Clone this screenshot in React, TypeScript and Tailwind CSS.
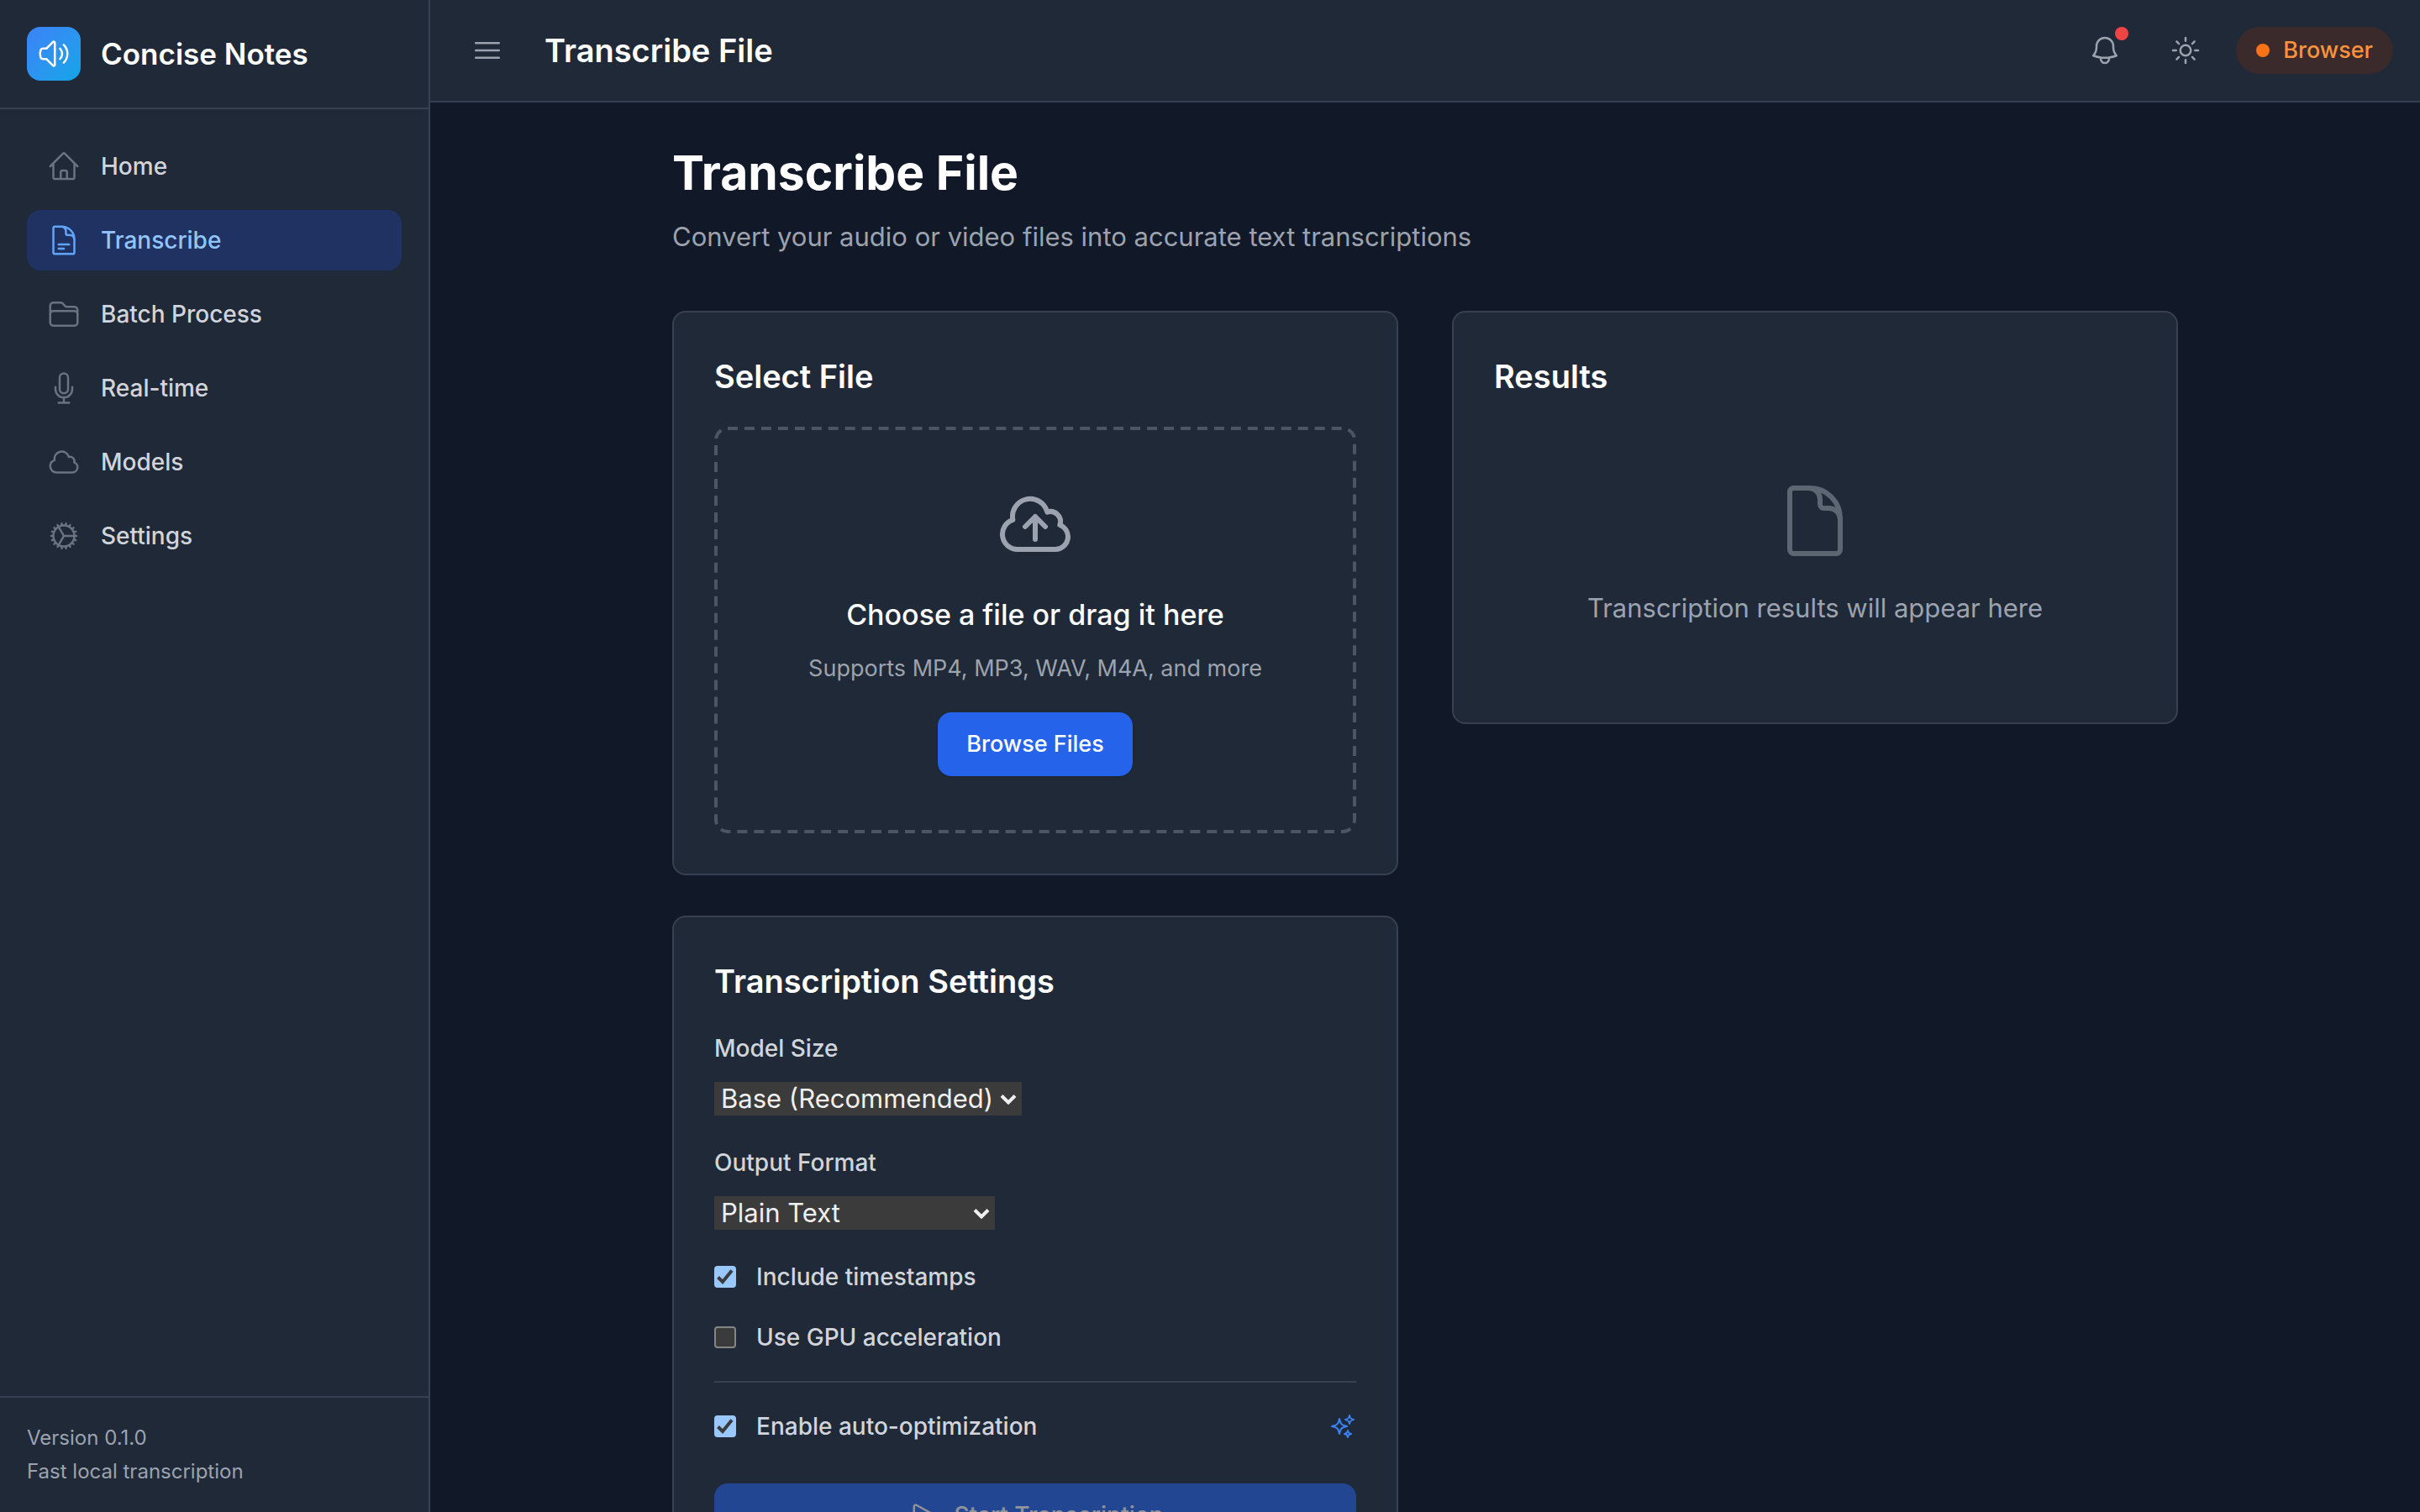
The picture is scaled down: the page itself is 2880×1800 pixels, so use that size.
import React, { useState } from 'react';
import type { IconType } from 'react-icons';
import {
  HiOutlineBars3,
  HiOutlineBell,
  HiOutlineCloud,
  HiOutlineCloudArrowUp,
  HiOutlineCog,
  HiOutlineDocument,
  HiOutlineDocumentText,
  HiOutlineFolder,
  HiOutlineHome,
  HiOutlineMicrophone,
  HiOutlinePlay,
  HiOutlineSparkles,
  HiOutlineSpeakerWave,
  HiOutlineSun,
} from 'react-icons/hi2';

const navItems: { label: string; icon: IconType; active?: boolean }[] = [
  { label: 'Home', icon: HiOutlineHome },
  { label: 'Transcribe', icon: HiOutlineDocumentText, active: true },
  { label: 'Batch Process', icon: HiOutlineFolder },
  { label: 'Real-time', icon: HiOutlineMicrophone },
  { label: 'Models', icon: HiOutlineCloud },
  { label: 'Settings', icon: HiOutlineCog },
];

function Sidebar() {
  return (
    <aside className="flex w-[512px] shrink-0 flex-col border-r-2 border-[#374151] bg-[#1f2937]">
      <div className="flex items-center gap-6 border-b-2 border-[#374151] p-8">
        <div className="flex size-16 items-center justify-center rounded-2xl bg-linear-to-br from-[#3b82f6] to-[#0ea5e9]">
          <HiOutlineSpeakerWave className="size-10 text-white" />
        </div>
        <span className="text-[35px] leading-[56px] font-semibold text-white">Concise Notes</span>
      </div>
      <nav className="flex flex-1 flex-col gap-4 p-8">
        {navItems.map(({ label, icon: Icon, active }) => (
          <a
            key={label}
            href="#"
            aria-current={active ? 'page' : undefined}
            className={
              active
                ? 'flex h-[72px] items-center gap-6 rounded-2xl bg-[#1f3261] px-6 text-[28px] leading-10 font-medium text-[#93c5fd]'
                : 'flex h-[72px] items-center gap-6 rounded-2xl px-6 text-[28px] leading-10 font-medium text-[#d1d5db]'
            }
          >
            <Icon className={active ? 'size-10 text-[#60a5fa]' : 'size-10 text-[#6b7280]'} />
            {label}
          </a>
        ))}
      </nav>
      <div className="flex flex-col gap-2 border-t-2 border-[#374151] p-8 text-[24px] leading-8 text-[#9ca3af]">
        <p>Version 0.1.0</p>
        <p>Fast local transcription</p>
      </div>
    </aside>
  );
}

function Header() {
  return (
    <header className="flex items-center justify-between border-b-2 border-[#374151] bg-[#1f2937] px-8 py-6">
      <div className="flex items-center gap-8">
        <button type="button" aria-label="Toggle menu" className="rounded-2xl p-4 text-[#9ca3af]">
          <HiOutlineBars3 className="size-10" />
        </button>
        <span className="text-[38px] leading-[56px] font-semibold text-white">Transcribe File</span>
      </div>
      <div className="flex items-center gap-6">
        <button type="button" aria-label="Notifications" className="relative rounded-2xl p-4 text-[#9ca3af]">
          <HiOutlineBell className="size-10" />
          <span className="absolute top-2 right-2 size-4 rounded-full bg-[#ef4444]" />
        </button>
        <button type="button" aria-label="Toggle theme" className="rounded-2xl p-4 text-[#9ca3af]">
          <HiOutlineSun className="size-10" />
        </button>
        <div className="flex items-center gap-4 rounded-full bg-[#3b2a2c] px-6 py-2 text-[27px] leading-10 font-medium text-[#fb923c]">
          <span className="size-4 rounded-full bg-[#f97316]" />
          Browser
        </div>
      </div>
    </header>
  );
}

function Card({ title, children }: { title: string; children: React.ReactNode }) {
  return (
    <section className="rounded-2xl border-2 border-[#374151] bg-[#1f2937] p-12">
      <h2 className="mb-8 text-[38px] leading-[56px] font-semibold text-white">{title}</h2>
      {children}
    </section>
  );
}

function DashedOutline() {
  return (
    <svg
      aria-hidden="true"
      fill="none"
      className="pointer-events-none absolute -top-0.5 -left-0.5 h-[calc(100%+4px)] w-[calc(100%+4px)] overflow-visible"
    >
      <rect
        width="100%"
        height="100%"
        rx="14"
        stroke="#4b5563"
        strokeWidth="4"
        pathLength="2460"
        strokeDasharray="12 8"
      />
    </svg>
  );
}

function SelectField({
  id,
  label,
  options,
  widthClass,
}: {
  id: string;
  label: string;
  options: string[];
  widthClass: string;
}) {
  return (
    <div>
      <label htmlFor={id} className="mb-5 block text-[28px] leading-10 font-medium text-[#d1d5db]">
        {label}
      </label>
      <div className={widthClass}>
        <select
          id={id}
          className="block h-10 w-full appearance-none bg-[#3b3b3b] pr-8 pl-2 text-[31px] leading-10 text-[#f0f0f0]"
        >
          {options.map((option) => (
            <option key={option}>{option}</option>
          ))}
        </select>
        <svg
          viewBox="0 0 20 14"
          fill="none"
          stroke="#f0f0f0"
          strokeWidth="4"
          className="pointer-events-none absolute top-3.5 right-1.5 h-[14px] w-5"
        >
          <path d="M2 2.5 10 10.5 18 2.5" />
        </svg>
      </div>
    </div>
  );
}

function CheckField({ label, initial }: { label: string; initial: boolean }) {
  const [checked, setChecked] = useState(initial);
  return (
    <label className="flex items-center gap-6 text-[28px] leading-10 font-medium text-[#d1d5db]">
      <span className="grid size-[26px] place-items-center">
        <input
          type="checkbox"
          checked={checked}
          onChange={(event) => setChecked(event.target.checked)}
          className="col-start-1 row-start-1 size-[26px] appearance-none rounded border-2 border-[#858585] bg-[#3b3b3b] checked:border-[#99c8ff] checked:bg-[#99c8ff]"
        />
        {checked && (
          <svg
            viewBox="0 0 26 26"
            fill="none"
            stroke="#3b3b3b"
            strokeWidth="4"
            className="pointer-events-none col-start-1 row-start-1 size-[26px]"
          >
            <path d="M4.5 13.5 10 19 21 5.5" />
          </svg>
        )}
      </span>
      {label}
    </label>
  );
}

export default function App() {
  return (
    <div className="flex h-screen overflow-hidden bg-[#111827] font-[Inter,sans-serif]">
      <Sidebar />
      <div className="flex min-w-0 flex-1 flex-col">
        <Header />
        <main className="flex-1 overflow-y-auto p-12 [scrollbar-width:none]">
          <div className="mx-auto max-w-[1792px]">
            <h1 className="text-[57px] leading-[72px] font-bold text-white">Transcribe File</h1>
            <p className="mt-4 text-[31px] leading-[48px] text-[#9ca3af]">
              Convert your audio or video files into accurate text transcriptions
            </p>
            <div className="mt-16 grid grid-cols-2 items-start gap-16">
              <div className="flex flex-col gap-12">
                <Card title="Select File">
                  <div className="relative flex flex-col items-center rounded-2xl border-4 border-transparent p-16 text-center">
                    <DashedOutline />
                    <HiOutlineCloudArrowUp className="size-24 text-[#9ca3af]" />
                    <p className="mt-8 text-[34px] leading-[56px] font-medium text-white">
                      Choose a file or drag it here
                    </p>
                    <p className="mt-4 text-[27px] leading-10 text-[#9ca3af]">
                      Supports MP4, MP3, WAV, M4A, and more
                    </p>
                    <button
                      type="button"
                      className="mt-8 rounded-2xl border-2 border-[#2563eb] bg-[#2563eb] px-8 py-4 text-[27px] leading-10 font-medium text-white shadow-sm"
                    >
                      Browse Files
                    </button>
                  </div>
                </Card>
                <Card title="Transcription Settings">
                  <div className="flex flex-col gap-8">
                    <SelectField
                      id="model-size"
                      label="Model Size"
                      options={['Base (Recommended)', 'Tiny (Fastest)', 'Small', 'Medium', 'Large']}
                      widthClass="relative mb-1 w-[366px]"
                    />
                    <SelectField
                      id="output-format"
                      label="Output Format"
                      options={['Plain Text', 'SRT Subtitles', 'WebVTT', 'JSON']}
                      widthClass="relative mb-1 w-[334px]"
                    />
                    <CheckField label="Include timestamps" initial={true} />
                    <CheckField label="Use GPU acceleration" initial={false} />
                    <div className="flex items-center justify-between border-t-2 border-[#374151] pt-8">
                      <CheckField label="Enable auto-optimization" initial={true} />
                      <HiOutlineSparkles className="size-8 text-[#3b82f6]" />
                    </div>
                  </div>
                  <button
                    type="button"
                    disabled
                    className="mt-12 flex w-full items-center justify-center gap-4 rounded-2xl border-2 border-[#2563eb] bg-[#2563eb] px-8 py-4 text-[28px] leading-10 font-medium text-white opacity-50"
                  >
                    <HiOutlinePlay className="size-10" />
                    Start Transcription
                  </button>
                </Card>
              </div>
              <Card title="Results">
                <div className="flex flex-col items-center py-16 text-center text-[#9ca3af]">
                  <HiOutlineDocument className="size-24 opacity-50" />
                  <p className="mt-8 text-[31px] leading-[48px]">Transcription results will appear here</p>
                </div>
              </Card>
            </div>
          </div>
        </main>
      </div>
    </div>
  );
}
